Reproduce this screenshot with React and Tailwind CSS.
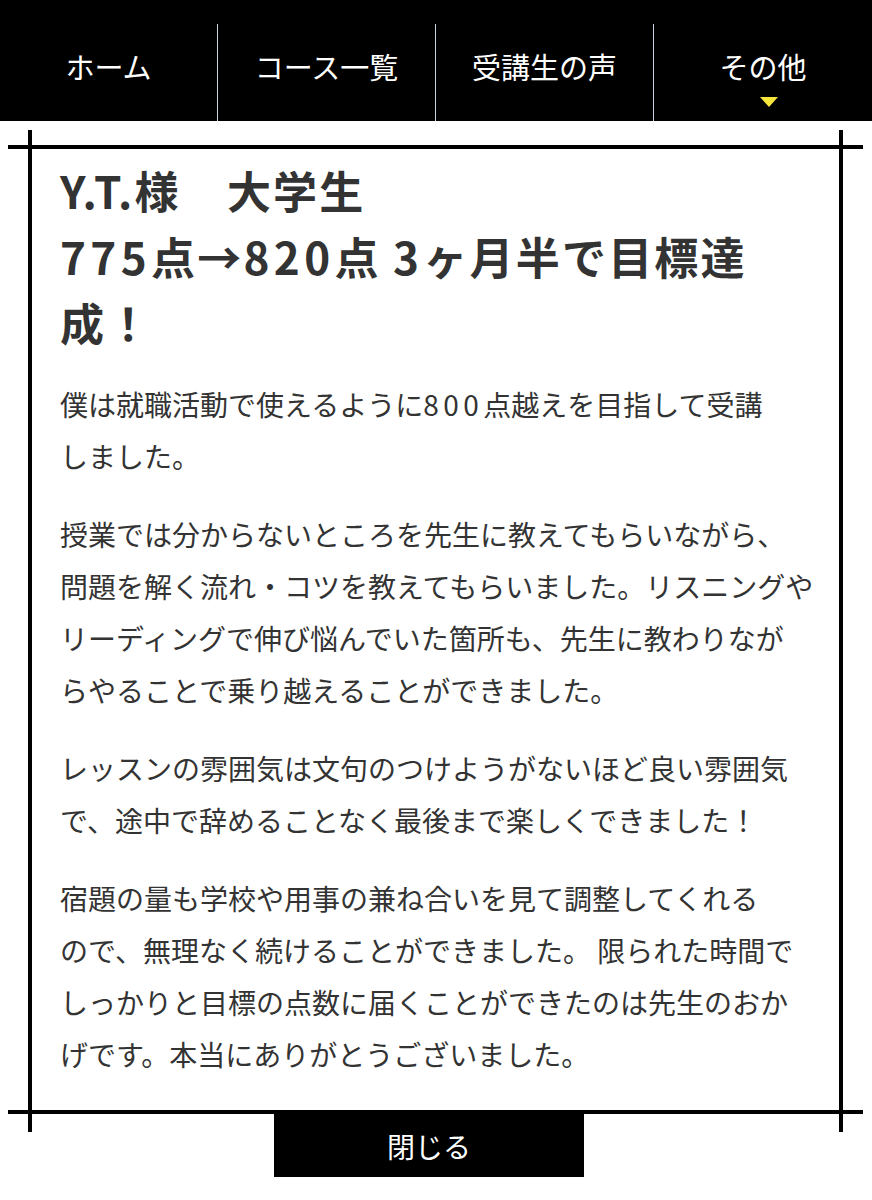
const navItems = ['ホーム', 'コース一覧', '受講生の声', 'その他'];

function N({ children, wide }) {
  return <span className={wide ? 'tracking-[0.1em]' : 'tracking-[0.16em]'}>{children}</span>;
}

export default function App() {
  return (
    <div className="min-h-[1200px] bg-white font-['Noto_Sans_CJK_JP',sans-serif]">
      <nav className="flex h-[121px] items-end bg-black">
        {navItems.map((label, i) => (
          <div
            key={label}
            className={`flex h-[97px] w-1/4 flex-col items-center pt-[21px] ${i < 3 ? 'border-r border-[#c9d2de]' : ''}`}
          >
            <span className="text-[29px] leading-[42px] text-white">{label}</span>
            {i === 3 && (
              <span className="ml-[12px] mt-[10px] h-0 w-0 border-x-[9px] border-t-[10px] border-x-transparent border-t-[#f8e53c]" />
            )}
          </div>
        ))}
      </nav>

      <div className="relative ml-[28px] mt-[24px] w-[815px] pb-[34px] pl-[32px] pt-[12px] text-[#333]">
        {/* frame lines with crossed corners */}
        <span className="absolute left-[-20px] right-[-20px] top-0 h-[4px] bg-black" />
        <span className="absolute bottom-0 left-[-20px] right-[-20px] h-[4px] bg-black" />
        <span className="absolute bottom-[-18px] left-0 top-[-15px] w-[4px] bg-black" />
        <span className="absolute bottom-[-18px] right-0 top-[-15px] w-[4px] bg-black" />

        <h2 className="whitespace-nowrap text-[44px] font-bold leading-[66px] tracking-[0.05em]">
          Y.T.様　大学生
          <br />
          <N wide>775</N>点→<N wide>820</N>点 <N wide>3</N>ヶ月半で目標達
          <br />
          成！
        </h2>

        <div className="mt-[23px] space-y-[26px] whitespace-nowrap text-[28px] leading-[52px]">
          <p>
            僕は就職活動で使えるように<N>800</N>点越えを目指して受講
            <br />
            しました。
          </p>
          <p>
            授業では分からないところを先生に教えてもらいながら、
            <br />
            問題を解く流れ・コツを教えてもらいました。リスニングや
            <br />
            リーディングで伸び悩んでいた箇所も、先生に教わりなが
            <br />
            らやることで乗り越えることができました。
          </p>
          <p>
            レッスンの雰囲気は文句のつけようがないほど良い雰囲気
            <br />
            で、途中で辞めることなく最後まで楽しくできました！
          </p>
          <p>
            宿題の量も学校や用事の兼ね合いを見て調整してくれる
            <br />
            ので、無理なく続けることができました。 限られた時間で
            <br />
            しっかりと目標の点数に届くことができたのは先生のおか
            <br />
            げです。本当にありがとうございました。
          </p>
        </div>
      </div>

      <div className="ml-[274px] flex h-[63px] w-[310px] items-center justify-center bg-black text-[28px] text-white">
        閉じる
      </div>
    </div>
  );
}
